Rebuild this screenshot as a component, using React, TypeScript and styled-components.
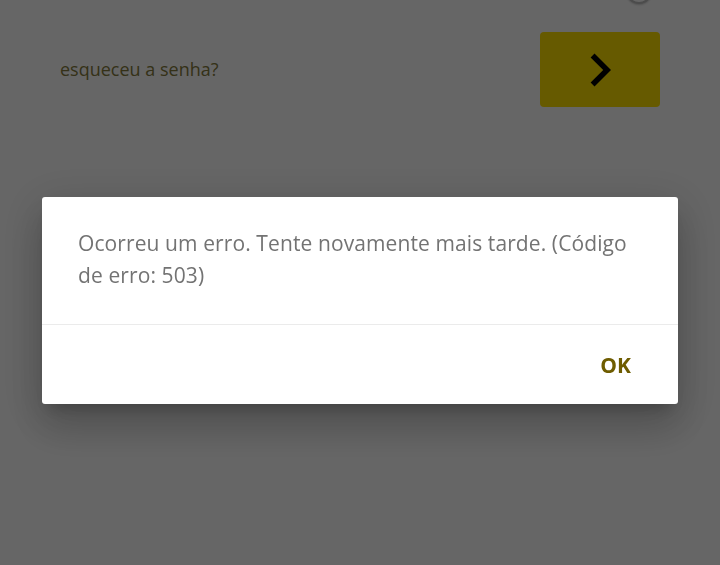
import React from 'react';
import styled, { createGlobalStyle } from 'styled-components';

const GlobalStyle = createGlobalStyle`
  html, body {
    margin: 0;
    padding: 0;
    background: #ffffff;
    font-family: 'Open Sans', 'Noto Sans', sans-serif;
    overflow: hidden;
  }
`;

const Page = styled.div`
  width: 720px;
  height: 565px;
  background: #ffffff;
  padding: 0 60px;
  box-sizing: border-box;
`;

const TopRow = styled.div`
  display: flex;
  justify-content: flex-end;
  padding-right: 8px;
  height: 32px;
  align-items: flex-start;
`;

const RadioCircle = styled.div`
  width: 26px;
  height: 26px;
  margin-top: -22px;
  border-radius: 50%;
  border: 2px solid #bdbdbd;
  box-sizing: border-box;
  background: #ffffff;
  box-shadow: 0 1px 2px rgba(0, 0, 0, 0.2);
`;

const ActionRow = styled.div`
  display: flex;
  align-items: center;
  justify-content: space-between;
`;

const ForgotLink = styled.a`
  font-size: 18px;
  line-height: 24px;
  margin-top: -2px;
  color: #857c3c;
  text-decoration: none;
`;

const SubmitButton = styled.button`
  width: 120px;
  height: 75px;
  border: none;
  border-radius: 4px;
  background: #ffe000;
  display: flex;
  align-items: center;
  justify-content: center;
  padding: 0;
  cursor: pointer;
`;

const Overlay = styled.div`
  position: fixed;
  inset: 0;
  background: rgba(0, 0, 0, 0.6);
  display: flex;
  justify-content: center;
  align-items: flex-start;
  padding-top: 197px;
  box-sizing: border-box;
`;

const Dialog = styled.div`
  width: 636px;
  background: #ffffff;
  border-radius: 3px;
  box-shadow: 0 11px 15px -7px rgba(0, 0, 0, 0.2), 0 24px 38px 3px rgba(0, 0, 0, 0.14),
    0 9px 46px 8px rgba(0, 0, 0, 0.12);
`;

const DialogContent = styled.div`
  padding: 30px 36px 33px;
  font-size: 21px;
  letter-spacing: 0.1px;
  line-height: 32px;
  color: #737373;
  border-bottom: 1px solid #ebebeb;
`;

const DialogActions = styled.div`
  height: 79px;
  display: flex;
  align-items: center;
  justify-content: flex-end;
  padding-right: 31px;
`;

const TextButton = styled.button`
  background: none;
  border: none;
  padding: 8px 16px;
  font-family: 'Open Sans', 'Noto Sans', sans-serif;
  font-weight: 700;
  font-size: 21px;
  color: #6e5c00;
  cursor: pointer;
`;

function ChevronRight() {
  return (
    <svg width="66" height="66" viewBox="0 0 24 24" fill="#000000">
      <path d="M10 6L8.59 7.41 13.17 12l-4.58 4.59L10 18l6-6z" />
    </svg>
  );
}

export default function App() {
  return (
    <>
      <GlobalStyle />
      <Page>
        <TopRow>
          <RadioCircle />
        </TopRow>
        <ActionRow>
          <ForgotLink href="#">esqueceu a senha?</ForgotLink>
          <SubmitButton type="button" aria-label="Entrar">
            <ChevronRight />
          </SubmitButton>
        </ActionRow>
      </Page>
      <Overlay>
        <Dialog role="alertdialog">
          <DialogContent>
            Ocorreu um erro. Tente novamente mais tarde. (Código de erro: 503)
          </DialogContent>
          <DialogActions>
            <TextButton type="button">OK</TextButton>
          </DialogActions>
        </Dialog>
      </Overlay>
    </>
  );
}
